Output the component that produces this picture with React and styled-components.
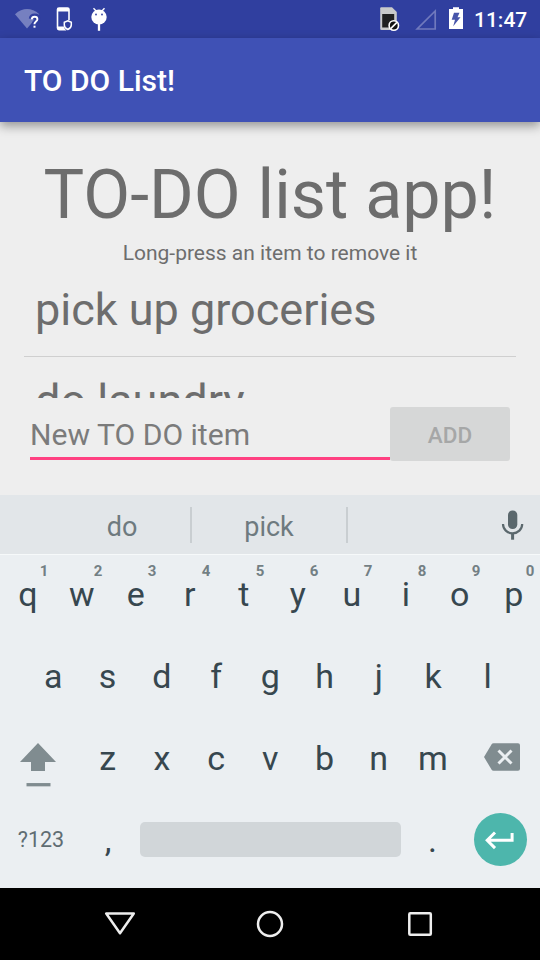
import React from 'react';
import styled, { createGlobalStyle } from 'styled-components';

const GlobalStyle = createGlobalStyle`
  * { box-sizing: border-box; }
  body { margin: 0; background: #eee; font-family: Roboto, sans-serif; }
`;

const Screen = styled.div`
  width: 540px;
  height: 960px;
  display: flex;
  flex-direction: column;
  overflow: hidden;
  background: #eeeeee;
`;

const StatusBar = styled.header`
  height: 38px;
  flex: none;
  display: flex;
  justify-content: space-between;
  background: #303f9f;
`;

const StatusGroup = styled.div`
  display: flex;
  height: 38px;
`;

const Clock = styled.span`
  width: 66px;
  padding-top: 1px;
  line-height: 38px;
  font-size: 21px;
  font-weight: 500;
  color: #fff;
  white-space: nowrap;
`;

const AppBar = styled.div`
  height: 84px;
  flex: none;
  padding: 0 24px;
  background: #3f51b5;
  box-shadow: 0 4px 10px rgba(0, 0, 0, 0.38);
  z-index: 1;
`;

const AppTitle = styled.h1`
  margin: 0;
  font-size: 30px;
  line-height: 85px;
  font-weight: 500;
  color: #fff;
`;

const Content = styled.main`
  height: 373px;
  flex: none;
  display: flex;
  flex-direction: column;
  padding: 24px 24px 0;
  color: #6d6d6d;
`;

const Heading = styled.h2`
  margin: 0;
  height: 95px;
  line-height: 99px;
  font-size: 68.2px;
  font-weight: 400;
  text-align: center;
  white-space: nowrap;
`;

const Hint = styled.p`
  margin: 0;
  height: 25px;
  line-height: 24px;
  font-size: 21px;
  text-align: center;
`;

const List = styled.ul`
  list-style: none;
  margin: 0;
  padding: 0;
  height: 132px;
  overflow: hidden;
`;

const ListItem = styled.li`
  height: 91px;
  padding-left: 11px;
  line-height: 87px;
  font-size: 45px;
  border-bottom: 1px solid #cfcfcf;
`;

const EntryRow = styled.div`
  height: 63px;
  margin: 0 6px;
  padding-top: 9px;
  display: flex;
`;

const EntryField = styled.input`
  width: 360px;
  height: 53px;
  padding: 5px 0 0;
  border: 0;
  border-bottom: 3px solid #ff4081;
  border-radius: 0;
  outline: 0;
  background: none;
  font: 400 30.1px Roboto, sans-serif;
  color: #6d6d6d;
  &::placeholder { color: #7b7b7b; opacity: 1; }
`;

const AddButton = styled.button`
  width: 120px;
  height: 54px;
  padding: 2px 0 0;
  border: 0;
  border-radius: 3px;
  background: #d6d7d7;
  color: #a6a7a7;
  font: 500 22.5px Roboto, sans-serif;
`;

const Suggestions = styled.div`
  height: 60px;
  flex: none;
  display: flex;
  align-items: center;
  background: #e2e6e9;
  border-bottom: 1px solid #f6f9fa;
`;

const Suggestion = styled.span`
  width: ${(p) => p.$width}px;
  padding-left: ${(p) => p.$inset || 0}px;
  padding-top: 4px;
  font-size: 27px;
  text-align: center;
  color: #6e7a7f;
`;

const Separator = styled.i`
  width: 2px;
  height: 36px;
  background: #c9ced1;
`;

const MicSlot = styled.div`
  flex: 1;
  display: flex;
  justify-content: flex-end;
  padding-right: 16px;
`;

const Keyboard = styled.section`
  height: 333px;
  flex: none;
  background: #ebeff2;
`;

const KeyRow = styled.div`
  height: ${(p) => p.$height || 82}px;
  padding: 0 0 0 ${(p) => p.$pad || 0}px;
  display: flex;
  align-items: center;
`;

const Key = styled.div`
  position: relative;
  flex: none;
  width: ${(p) => p.$width || 54}px;
  height: 100%;
  padding: ${(p) => p.$drop || 0}px 0 ${(p) => p.$lift || 0}px ${(p) => p.$inset || 0}px;
  display: flex;
  align-items: center;
  justify-content: center;
  font-size: ${(p) => p.$size || 34}px;
  color: ${(p) => p.$color || '#37474f'};
`;

const KeyNumber = styled.sup`
  position: absolute;
  top: 6px;
  left: 39px;
  line-height: 20px;
  font-size: 15px;
  font-weight: 700;
  color: #737f84;
`;

const HomeRow = styled(KeyRow)`
  height: 84px;
`;

const SpaceBar = styled.div`
  width: 261px;
  height: 35px;
  margin: 0 4px 0 5px;
  border-radius: 5px;
  background: #d1d6d9;
`;

const EnterKey = styled.div`
  width: 53px;
  height: 53px;
  margin-left: 15px;
  border-radius: 50%;
  background: #4db6ac;
`;

const NavBar = styled.nav`
  height: 72px;
  flex: none;
  display: flex;
  align-items: center;
  justify-content: center;
  gap: 110px;
  background: #000;
`;

const Icon = styled.svg`
  display: block;
  flex: none;
`;

const NotificationIcons = () => (
  <Icon width="120" height="38" viewBox="0 0 120 38">
    <path d="M15 14.200Q27 4 39.300 14.200L27 28.500Z" fill="#7680c0" />
    <path d="M31.500 19q.4-2.700 3.200-2.700 3 0 3 2.700c0 2.600-3.200 2.700-3.200 5.200" fill="none" stroke="#303f9f" strokeWidth="5.500" />
    <path d="M31.700 19.300q.3-2.500 2.900-2.500 2.800 0 2.800 2.400c0 2.300-3 2.500-3 5" fill="none" stroke="#fff" strokeWidth="1.900" />
    <rect x="33.500" y="25.700" width="2" height="2" fill="#fff" />
    <path fillRule="evenodd" d="M59 7.200h8.500q2.300 0 2.300 2.300V20h-1.600v-8.600H58.300v15.200h5.500q.5 2.500 2.700 3.800H59q-2.300 0-2.300-2.300V9.500q0-2.300 2.300-2.300z" fill="#fff" />
    <path d="M67.800 20.800l3.500 1.500v2.700q0 2.900-3.500 4.500-3.500-1.600-3.500-4.500v-2.700z" fill="#303f9f" stroke="#fff" strokeWidth="1.500" />
    <path d="M93.500 8.300l3 3.200M104.500 8.300l-3 3.200" stroke="#fff" strokeWidth="1.400" />
    <ellipse cx="99" cy="17" rx="7.700" ry="7.500" fill="#fff" />
    <path d="M99 24v6.800" stroke="#fff" strokeWidth="2.300" />
    <circle cx="96" cy="14.500" r=".9" fill="#303f9f" />
    <circle cx="102" cy="14.500" r=".9" fill="#303f9f" />
  </Icon>
);

const SystemIcons = () => (
  <Icon width="94" height="38" viewBox="380 0 94 38">
    <path d="M381.200 7.200H392l4.800 4.800v16.500q0 1.500-1.500 1.500h-13.800q-1.300 0-1.300-1.300V8.200q0-1 1-1z" fill="#c9caca" />
    <path d="M382.200 14h12v13.500h-12z" fill="#202020" />
    <circle cx="393.800" cy="25.500" r="4.700" fill="#111" stroke="#fff" strokeWidth="1.600" />
    <path d="M390.700 28.600l6.200-6.200" stroke="#fff" strokeWidth="1.600" />
    <path d="M435.200 11v18H417.200z" fill="none" stroke="#7079bd" strokeWidth="1.700" />
    <path d="M449 9h4V7.200h6V9h4v20h-14z" fill="#fff" />
    <path d="M454 12.700h5.500l-2 4.500h3l-7.300 9 1.800-6.500h-3.300z" fill="#4755aa" />
  </Icon>
);

const MicIcon = () => (
  <Icon width="24" height="33" viewBox="0 0 24 33">
    <rect x="8" y="2.500" width="9.300" height="18.500" rx="4.500" fill="#5b686d" />
    <path d="M3 16c0 5.200 4.300 9.300 9.600 9.300s9.600-4.100 9.600-9.300" fill="none" stroke="#5b686d" strokeWidth="2.200" />
    <path d="M12.600 25v6.700" stroke="#5b686d" strokeWidth="3" />
  </Icon>
);

const ShiftIcon = () => (
  <Icon width="36" height="46" viewBox="0 0 36 46">
    <path d="M18 2L36 21H25v9H11v-9H0z" fill="#808c90" />
    <path d="M6.500 43.700h24" stroke="#808c90" strokeWidth="3.300" />
  </Icon>
);

const BackspaceIcon = () => (
  <Icon width="36" height="28" viewBox="0 0 36 28">
    <path d="M9.500.3H34q2 0 2 2v23.400q0 2-2 2H9.500q-1.200 0-2-1.200L0 14 7.500 1.500Q8.300.3 9.500.3z" fill="#808c90" />
    <path d="M14.500 7.500l13 13M27.500 7.500l-13 13" stroke="#ebeff2" strokeWidth="3" />
  </Icon>
);

const EnterIcon = () => (
  <Icon width="53" height="53" viewBox="0 0 53 53">
    <path d="M21 19.500l-7.800 7.800 7.800 7.800M13.200 27.300h24.900v-7.300" fill="none" stroke="#fff" strokeWidth="3" />
  </Icon>
);

const TOP_KEYS = 'qwertyuiop'.split('');
const HOME_KEYS = 'asdfghjkl'.split('');
const BOTTOM_KEYS = 'zxcvbnm'.split('');

export default function App() {
  return (
    <Screen>
      <GlobalStyle />
      <StatusBar>
        <NotificationIcons />
        <StatusGroup>
          <SystemIcons />
          <Clock>11:47</Clock>
        </StatusGroup>
      </StatusBar>
      <AppBar>
        <AppTitle>TO DO List!</AppTitle>
      </AppBar>
      <Content>
        <Heading>TO-DO list app!</Heading>
        <Hint>Long-press an item to remove it</Hint>
        <List>
          <ListItem>pick up groceries</ListItem>
          <ListItem>do laundry</ListItem>
        </List>
        <EntryRow>
          <EntryField placeholder="New TO DO item" />
          <AddButton disabled>ADD</AddButton>
        </EntryRow>
      </Content>
      <Suggestions>
        <Suggestion $width={190} $inset={54}>do</Suggestion>
        <Separator />
        <Suggestion $width={154}>pick</Suggestion>
        <Separator />
        <MicSlot><MicIcon /></MicSlot>
      </Suggestions>
      <Keyboard>
        <KeyRow $height={78} $pad={0.8}>
          {TOP_KEYS.map((letter, i) => (
            <Key key={letter}>
              {letter}
              <KeyNumber>{(i + 1) % 10}</KeyNumber>
            </Key>
          ))}
        </KeyRow>
        <HomeRow $pad={26}>
          {HOME_KEYS.map((letter) => <Key key={letter} $width={54.3} $drop={2}>{letter}</Key>)}
        </HomeRow>
        <KeyRow>
          <Key $width={76} $drop={12}><ShiftIcon /></Key>
          <KeyRow $pad={4.6}>
            {BOTTOM_KEYS.map((letter) => <Key key={letter} $width={54.2}>{letter}</Key>)}
          </KeyRow>
          <Key $width={80} $inset={4} $lift={2}><BackspaceIcon /></Key>
        </KeyRow>
        <KeyRow $height={80}>
          <Key $width={81} $inset={1} $size={21.5} $color="#5f6d73">?123</Key>
          <Key $drop={1}>,</Key>
          <SpaceBar />
          <Key $drop={1} $inset={1}>.</Key>
          <EnterKey><EnterIcon /></EnterKey>
        </KeyRow>
      </Keyboard>
      <NavBar>
        <Icon width="40" height="40" viewBox="0 0 40 40">
          <path d="M6.200 9.500h27.600L20 29.200z" fill="none" stroke="#eee" strokeWidth="2.500" strokeLinejoin="round" />
        </Icon>
        <Icon width="40" height="40" viewBox="0 0 40 40">
          <circle cx="20" cy="20" r="12" fill="none" stroke="#eee" strokeWidth="2.500" />
        </Icon>
        <Icon width="40" height="40" viewBox="0 0 40 40">
          <rect x="9.300" y="9.300" width="21.500" height="21.500" rx="1" fill="none" stroke="#eee" strokeWidth="2.500" />
        </Icon>
      </NavBar>
    </Screen>
  );
}
